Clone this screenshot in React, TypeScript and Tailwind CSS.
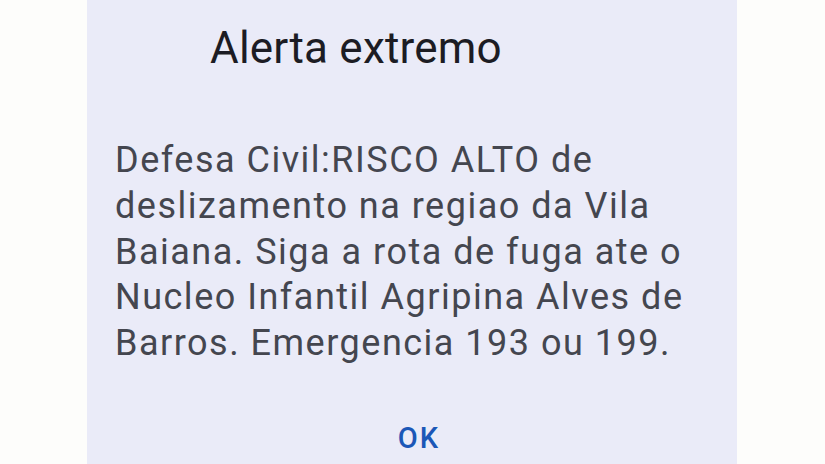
import React from "react";

export default function App() {
  return (
    <div className="w-[825px] h-[464px] bg-[#fdfdfb] overflow-hidden flex" style={{ fontFamily: "Roboto, 'Noto Sans', sans-serif" }}>
      <div className="ml-[87px] w-[650px] h-full bg-[#eaebf8] flex flex-col">
        <h1 className="pt-[22px] pl-[123px] text-[44px] leading-[52px] text-[#1c1c24] font-normal tracking-[0.2px]">Alerta extremo</h1>
        <p className="mt-[64px] pl-[28px] pr-[10px] text-[36px] leading-[45.75px] text-[#44464f] tracking-[1.5px]">
          Defesa Civil:RISCO ALTO de deslizamento na regiao da Vila Baiana. Siga a rota de fuga ate o Nucleo Infantil Agripina Alves de Barros. Emergencia 193 ou 199.
        </p>
        <div className="flex-1" />
        <div className="flex justify-center pb-[9px]">
          <button className="text-[29px] leading-[34px] text-[#1b57b7] font-medium tracking-[2px] ml-[14px]">OK</button>
        </div>
      </div>
    </div>
  );
}
